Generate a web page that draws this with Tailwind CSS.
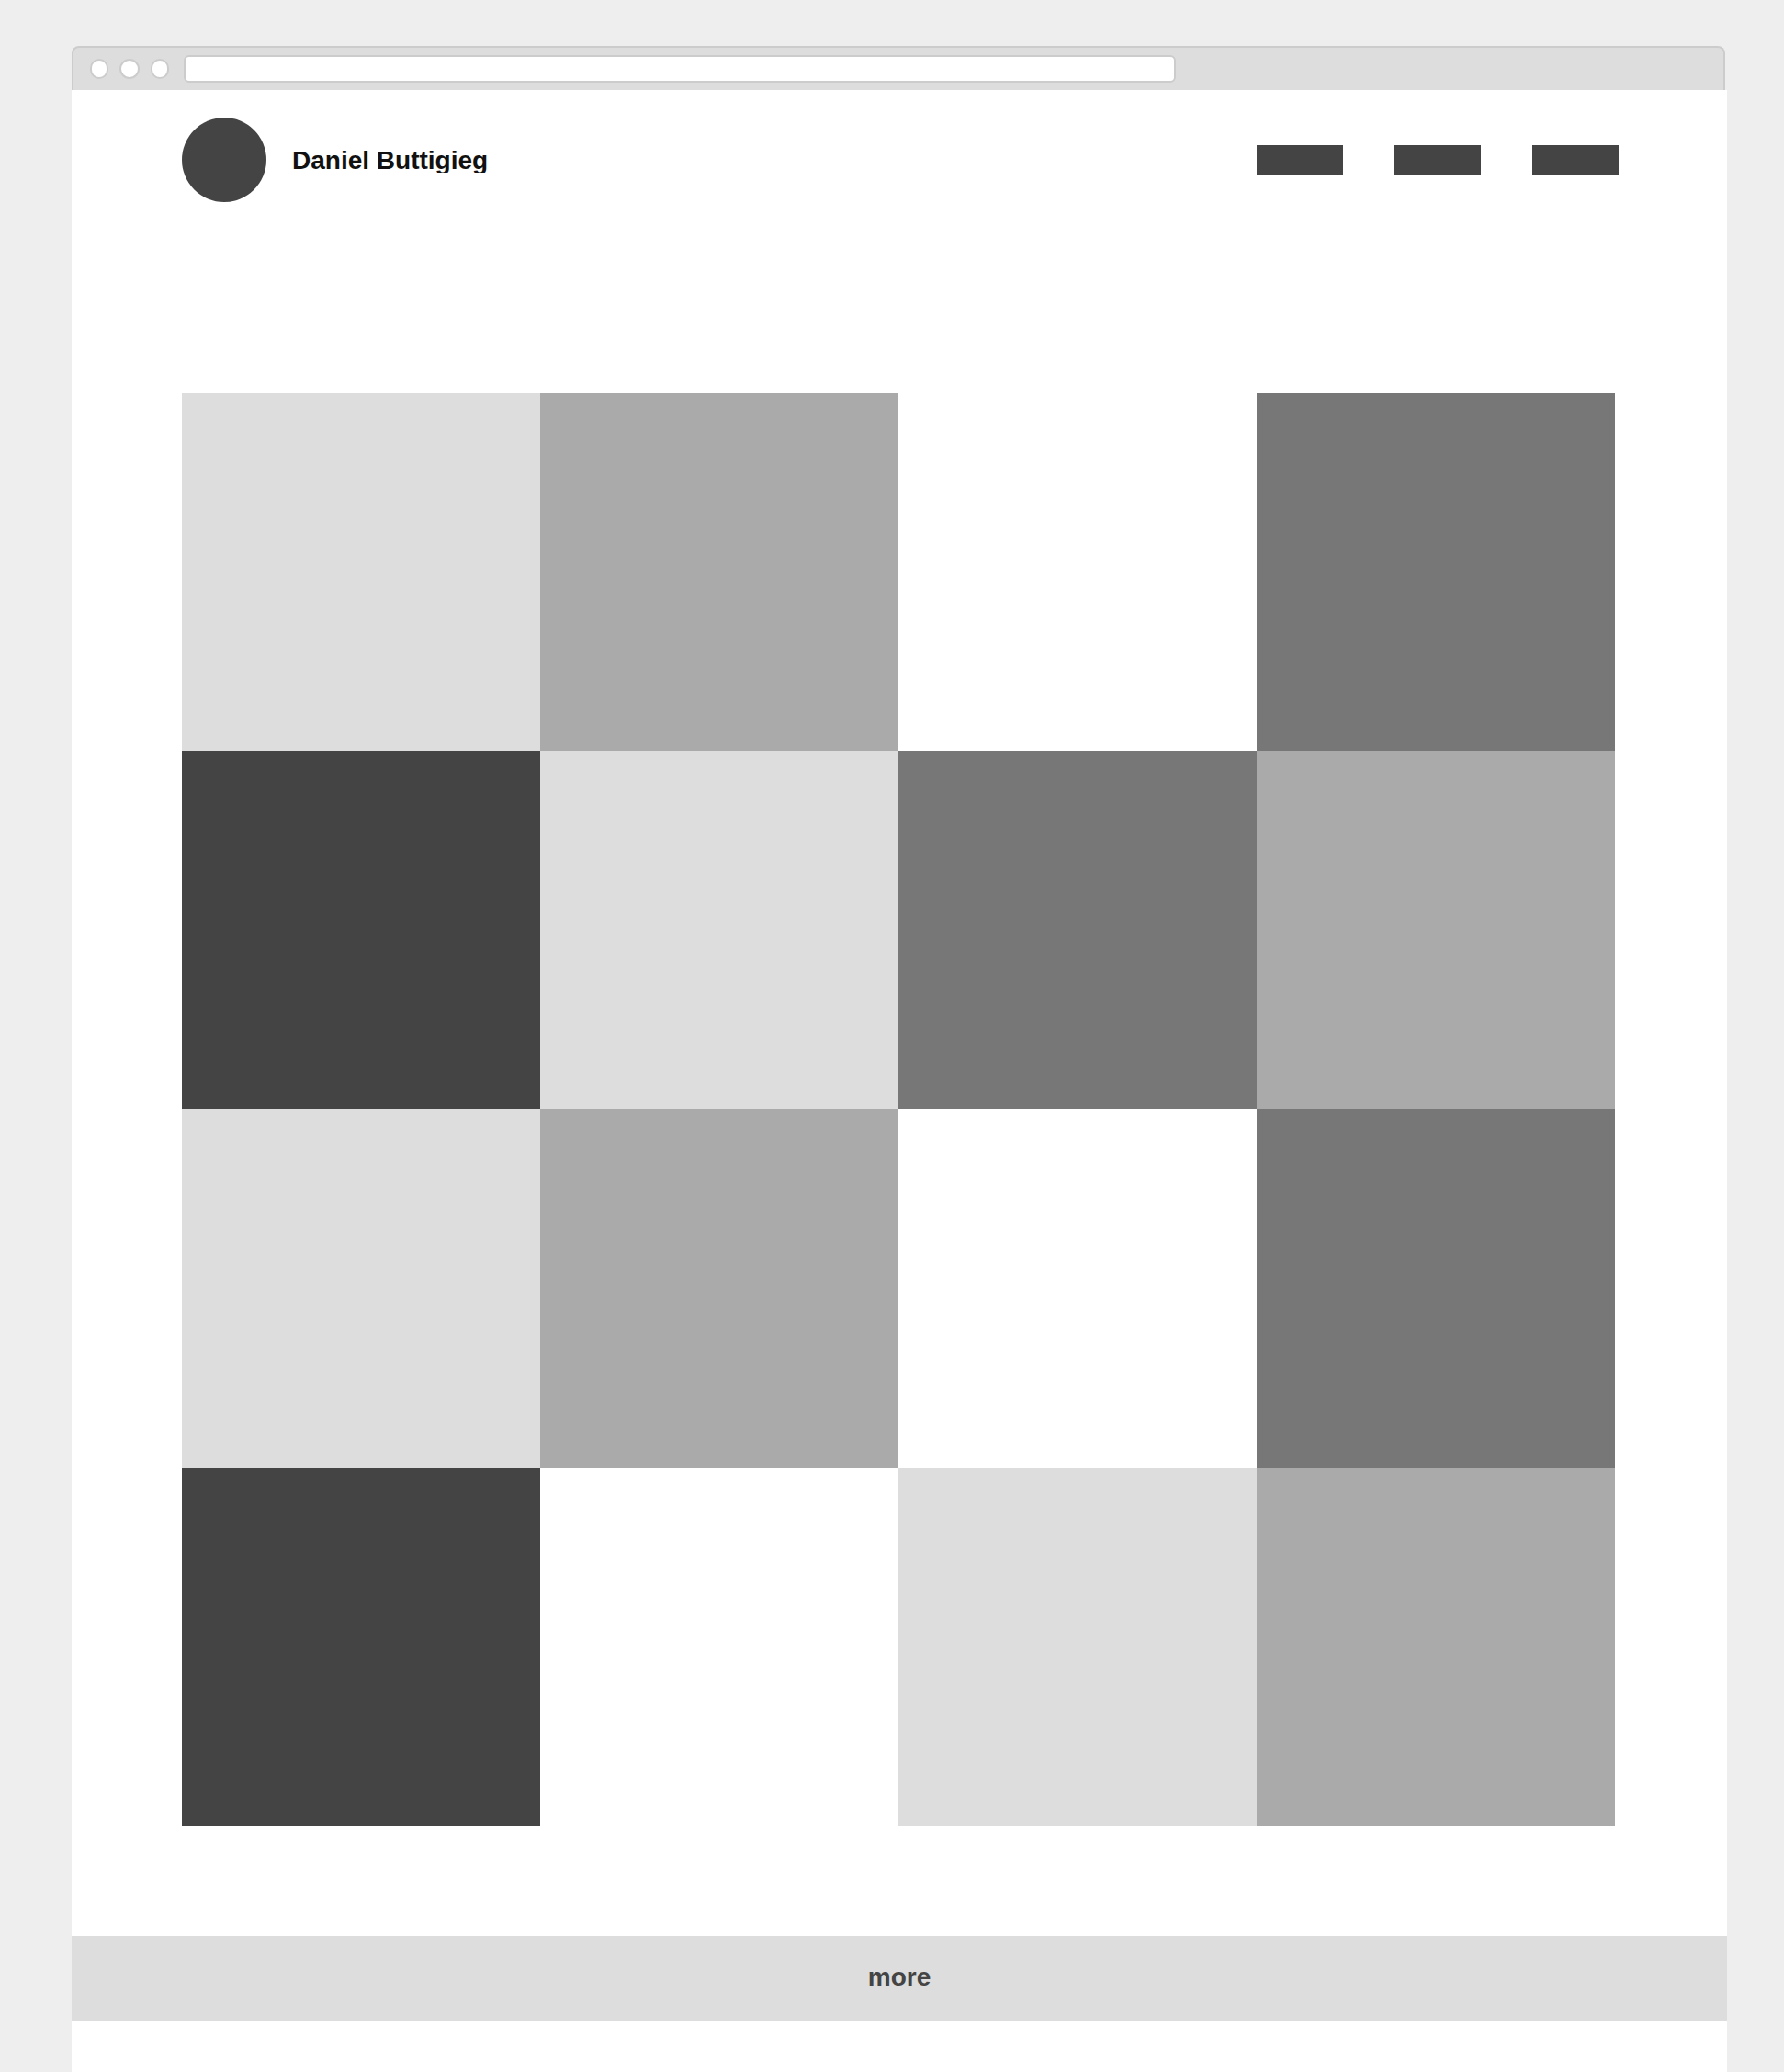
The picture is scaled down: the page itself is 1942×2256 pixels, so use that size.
<!DOCTYPE html>
<html lang="en">
<head>
<meta charset="utf-8">
<meta name="viewport" content="width=device-width, initial-scale=1">
<title>Daniel Buttigieg</title>
<script src="https://cdn.jsdelivr.net/npm/@tailwindcss/browser@4"></script>
</head>
<body class="bg-[#eee] font-['Liberation_Sans',Arial,sans-serif] text-[28px] leading-none font-bold">
<div class="flex min-h-screen flex-col pt-[50px] pr-[62px] pl-[78px]">
  <!-- Browser chrome -->
  <div class="mr-[2px] flex h-12 items-start rounded-t-lg border-x-2 border-t-2 border-[#ccc] bg-[#ddd] pt-2">
    <div class="mt-1 ml-[18px] flex shrink-0 gap-3" aria-hidden="true">
      <span class="h-[22px] w-5 rounded-full border-2 border-[#ccc] bg-white"></span>
      <span class="h-[22px] w-[22px] rounded-full border-2 border-[#ccc] bg-white"></span>
      <span class="h-[22px] w-5 rounded-full border-2 border-[#ccc] bg-white"></span>
    </div>
    <input type="text" aria-label="Address" class="ml-4 h-[30px] w-[calc(60%+2px)] rounded-md border-2 border-[#ccc] bg-white px-2 text-base font-normal">
  </div>

  <div class="flex flex-1 flex-col bg-white">
    <header class="flex items-center justify-between pt-[30px] pr-[118px] pl-[120px]">
      <div class="flex items-center gap-7">
        <div class="size-[92px] rounded-full bg-[#444]"></div>
        <h1 class="h-7 overflow-hidden pt-px text-[#111]">Daniel Buttigieg</h1>
      </div>
      <nav class="flex gap-14" aria-label="Main">
        <a href="#work" aria-label="Work" class="h-8 w-[94px] bg-[#444]"></a>
        <a href="#about" aria-label="About" class="h-8 w-[94px] bg-[#444]"></a>
        <a href="#contact" aria-label="Contact" class="h-8 w-[94px] bg-[#444]"></a>
      </nav>
    </header>

    <!-- Portfolio tiles -->
    <main class="mt-[208px] mr-[122px] mb-[120px] ml-[120px] grid grid-cols-4">
      <div class="aspect-square bg-[#ddd]"></div>
      <div class="aspect-square bg-[#aaa]"></div>
      <div class="aspect-square bg-white"></div>
      <div class="aspect-square bg-[#777]"></div>
      <div class="aspect-square bg-[#444]"></div>
      <div class="aspect-square bg-[#ddd]"></div>
      <div class="aspect-square bg-[#777]"></div>
      <div class="aspect-square bg-[#aaa]"></div>
      <div class="aspect-square bg-[#ddd]"></div>
      <div class="aspect-square bg-[#aaa]"></div>
      <div class="aspect-square bg-white"></div>
      <div class="aspect-square bg-[#777]"></div>
      <div class="aspect-square bg-[#444]"></div>
      <div class="aspect-square bg-white"></div>
      <div class="aspect-square bg-[#ddd]"></div>
      <div class="aspect-square bg-[#aaa]"></div>
    </main>

    <button type="button" class="h-[92px] w-full bg-[#ddd] pb-[2px] text-[#444]">more</button>
  </div>
</div>
</body>
</html>
